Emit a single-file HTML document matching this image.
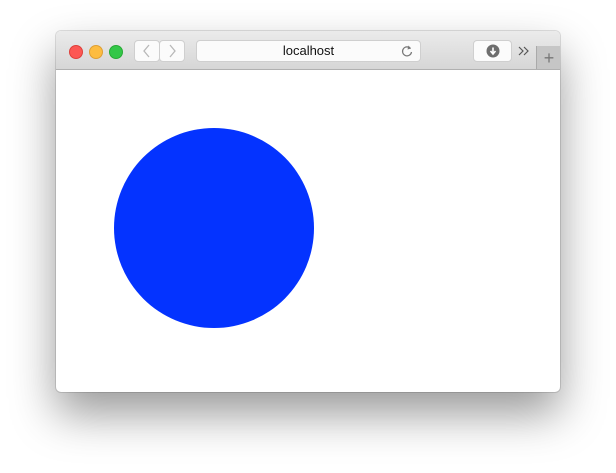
<!DOCTYPE html>
<html><head><style>
body{margin:0;width:616px;height:473px;background:#fff;position:relative;overflow:hidden;font-family:"Liberation Sans",sans-serif}
.win{position:absolute;left:56px;top:31px;width:504px;height:361px;border-radius:5px;background:#fff;box-shadow:0 22px 45px rgba(0,0,0,.4),0 0 0 1px rgba(0,0,0,.12);overflow:hidden}
.bar{position:absolute;left:0;top:0;width:504px;height:38px;background:linear-gradient(#ebebeb,#d6d6d6);border-bottom:1px solid #b0b0b0}
.dot{position:absolute;top:14px;width:12px;height:12px;border-radius:50%}
.btn{position:absolute;top:9px;height:22px;background:#fbfbfb;border:1px solid #cfcfcf;border-radius:4px;box-sizing:border-box}
.circle{position:absolute;left:58px;top:97px;width:200px;height:200px;border-radius:50%;background:#0433ff}
</style></head><body>
<div class="win">
<div class="bar">
<div class="dot" style="left:13px;background:#fc5753;border:0.5px solid #de3f3a"></div>
<div class="dot" style="left:33px;background:#fdbc40;border:0.5px solid #de9f34"></div>
<div class="dot" style="left:53px;background:#33c748;border:0.5px solid #27aa35"></div>
<div class="btn" style="left:78px;width:26px"><svg width="24" height="20" style="position:absolute;left:0;top:0"><path d="M14 4 L9 10 L14 16" stroke="#b8b8b8" stroke-width="1.3" fill="none"/></svg></div>
<div class="btn" style="left:103px;width:26px"><svg width="24" height="20" style="position:absolute;left:0;top:0"><path d="M10 4 L15 10 L10 16" stroke="#b8b8b8" stroke-width="1.3" fill="none"/></svg></div>
<div class="btn" style="left:140px;width:225px;font-size:13px;text-align:center;line-height:20px;color:#111">localhost
<svg width="14" height="14" style="position:absolute;right:6px;top:3px"><path d="M10.5 4.5 A4.5 4.5 0 1 0 11.5 8" stroke="#777" stroke-width="1.2" fill="none"/><path d="M8.5 1.5 L11 4.5 L7.5 5.5Z" fill="#777"/></svg></div>
<div class="btn" style="left:417px;width:39px"><svg width="14" height="14" style="position:absolute;left:12px;top:3px"><circle cx="7" cy="7" r="6.5" fill="#6e6e6e"/><path d="M7 3.5V9M4.5 7L7 10L9.5 7" stroke="#fff" stroke-width="1.6" fill="none"/></svg></div>
<svg width="14" height="12" style="position:absolute;left:461px;top:14px"><path d="M2 2L6 6L2 10M7 2L11 6L7 10" stroke="#555" stroke-width="1.2" fill="none"/></svg>
<div style="position:absolute;left:480px;top:15px;width:24px;height:23px;background:#c6c6c6;border-left:1px solid #aaa;color:#777;font-size:18px;text-align:center;line-height:24px">+</div>
</div>
<div class="circle"></div>
</div>
</body></html>
